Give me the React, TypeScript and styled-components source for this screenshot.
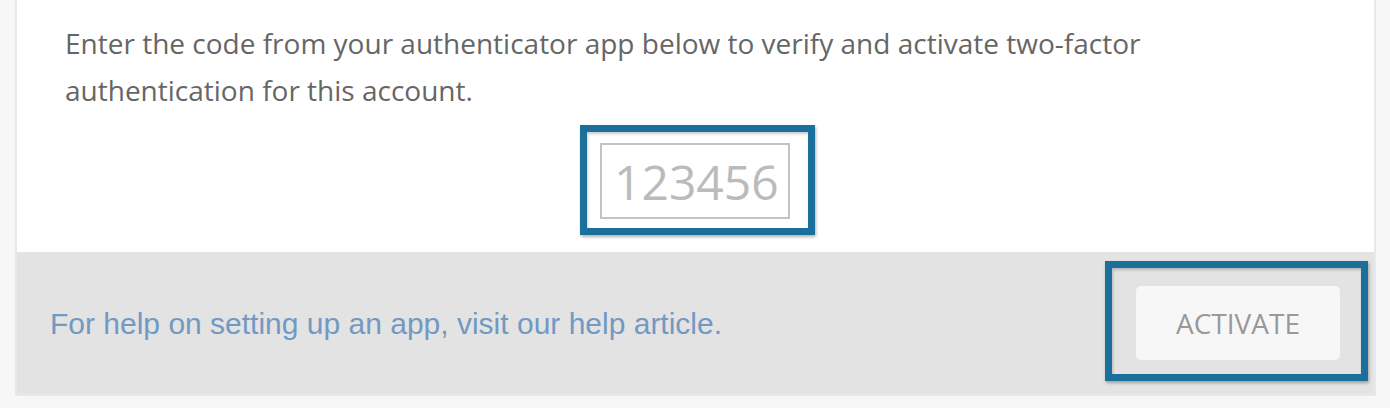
import React from 'react';
import styled, { createGlobalStyle } from 'styled-components';

const GlobalStyle = createGlobalStyle`
  html, body {
    margin: 0;
    padding: 0;
    background: #f7f7f7;
  }
`;

const Page = styled.div`
  padding-left: 15px;
  width: 1361px;
`;

const Card = styled.div`
  border: 2px solid #e4e9ee;
  border-top: none;
  background: #fff;
`;

const Body = styled.div`
  padding: 20px 44px 17px 48px;
  height: 215px;
`;

const Intro = styled.p`
  margin: 0;
  font-family: 'Open Sans', sans-serif;
  font-size: 28px;
  line-height: 47px;
  color: #666;
  width: 1100px;
`;

const Highlight = styled.div`
  border: 7px solid #1a6f9b;
  box-shadow: 1px 2px 3px rgba(0, 0, 0, 0.3), inset 1px 2px 3px rgba(0, 0, 0, 0.2);
`;

const CodeRow = styled.div`
  display: flex;
  justify-content: center;
  margin-top: 11px;
`;

const CodeHighlight = styled(Highlight)`
  padding: 11px 18px 9px 13px;
`;

const CodeInput = styled.input`
  display: block;
  box-sizing: border-box;
  width: 190px;
  height: 76px;
  border: 2px solid #c3c3c3;
  padding: 0 0 0 12px;
  font-family: 'Open Sans', sans-serif;
  font-size: 48px;
  color: #bbb;
  outline: none;
  &::placeholder {
    color: #bbb;
  }
`;

const Footer = styled.div`
  display: flex;
  align-items: center;
  justify-content: space-between;
  height: 142px;
  background: #e3e3e3;
  padding: 0 6px 0 33px;
`;

const HelpLink = styled.a`
  font-family: 'Liberation Sans', Arial, sans-serif;
  font-size: 30px;
  color: #7299c2;
  text-decoration: none;
  margin-top: 2px;
`;

const ButtonHighlight = styled(Highlight)`
  padding: 18px 21px 14px 24px;
  margin-top: -4px;
`;

const ActivateButton = styled.button`
  display: block;
  width: 204px;
  height: 74px;
  border: none;
  border-radius: 5px;
  background: #f7f7f7;
  font-family: 'Open Sans', sans-serif;
  font-size: 28px;
  color: #999;
`;

export default function App() {
  return (
    <>
      <GlobalStyle />
      <Page>
        <Card>
          <Body>
            <Intro>
              Enter the code from your authenticator app below to verify and activate two-factor
              authentication for this account.
            </Intro>
            <CodeRow>
              <CodeHighlight>
                <CodeInput placeholder="123456" />
              </CodeHighlight>
            </CodeRow>
          </Body>
          <Footer>
            <HelpLink href="#">For help on setting up an app, visit our help article.</HelpLink>
            <ButtonHighlight>
              <ActivateButton type="button">ACTIVATE</ActivateButton>
            </ButtonHighlight>
          </Footer>
        </Card>
      </Page>
    </>
  );
}
